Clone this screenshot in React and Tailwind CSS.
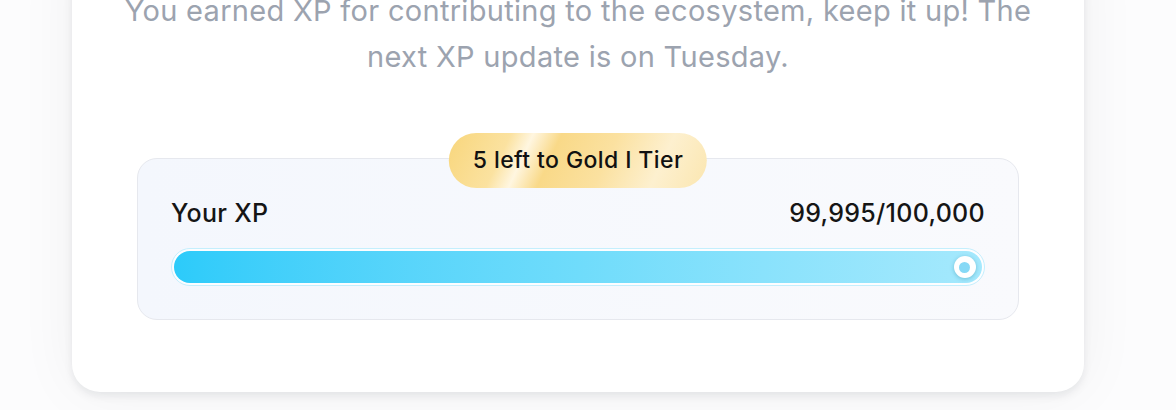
import React from 'react';

function XpProgress({ current, total }) {
    const pct = Math.min(100, (current / total) * 100);
    return (
        <div className="rounded-full border border-[#c4effd] bg-white/70 p-[2px] h-[38px]">
            <div
                className="relative h-full rounded-full bg-gradient-to-r from-[#2ccbfa] via-[#6fdcfb] to-[#a5e9fd]"
                style={{ width: `${pct}%` }}
            >
                <div className="absolute right-[6px] top-1/2 -translate-y-1/2 w-[22px] h-[22px] rounded-full bg-white shadow-[0_1px_4px_rgba(14,116,144,0.35)] flex items-center justify-center">
                    <div className="w-[11px] h-[11px] rounded-full bg-[#86d9f6]" />
                </div>
            </div>
        </div>
    );
}

export default function App() {
    return (
        <div className="w-[1176px] h-[410px] overflow-hidden bg-[#fcfcfd] font-['Inter',sans-serif]">
            <div className="ml-[72px] w-[1012px] -mt-[60px] rounded-[28px] bg-white shadow-[0_4px_8px_rgba(15,23,42,0.08),0_0_60px_rgba(15,23,42,0.05)] pt-[48px] pb-[72px]">
                <p className="text-center text-[29px] leading-[46px] tracking-[0.3px] text-[#9ca3af] px-[36px]">
                    You earned XP for contributing to the ecosystem, keep it up! The next XP update is on Tuesday.
                </p>
                <div className="relative mx-[65px] mt-[78px] rounded-[20px] border border-[#e6e8ee] bg-gradient-to-r from-[#f4f7fd] to-[#f9fafd] px-[33px] pt-[40px] pb-[33px]">
                    <div className="absolute left-1/2 -translate-x-1/2 -top-[26px] h-[55px] px-[24px] rounded-full flex items-center bg-[linear-gradient(115deg,#f8d67c_0%,#fbe2a0_22%,#fff6e0_30%,#f9d988_40%,#fbe1a0_60%,#fdf0cf_80%,#fbe6b0_100%)]">
                        <span className="text-[23px] font-medium tracking-[0.4px] text-[#111] whitespace-nowrap">5 left to Gold I Tier</span>
                    </div>
                    <div className="flex items-center justify-between mb-[21px]">
                        <span className="text-[25px] leading-[28px] font-medium tracking-[0.3px] text-[#151515]">Your XP</span>
                        <span className="text-[25px] leading-[28px] font-medium tracking-[0.3px] text-[#151515]">99,995/100,000</span>
                    </div>
                    <XpProgress current={99995} total={100000} />
                </div>
            </div>
        </div>
    );
}
